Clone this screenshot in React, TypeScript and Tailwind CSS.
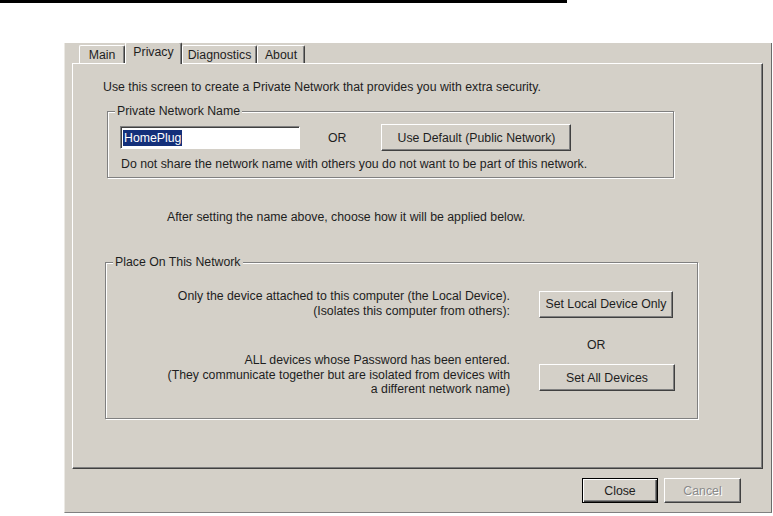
import React from 'react';

const raised =
  'border border-t-white border-l-white border-r-[#404040] border-b-[#404040] shadow-[inset_-1px_-1px_0_#808080]';

const Button: React.FC<{ label: string; className?: string }> = ({ label, className }) => (
  <div className={`flex items-center justify-center bg-[#d4d0c8] ${raised} ${className ?? ''}`}>{label}</div>
);

const Tab: React.FC<{ label: string; width: string; active?: boolean }> = ({ label, width, active }) => (
  <div
    className={`${width} flex items-center justify-center border-t border-l border-r border-t-white border-l-white border-r-[#404040] rounded-t-[2px] shadow-[inset_-1px_0_0_#808080] ${
      active ? 'relative z-10 h-[22px] -mb-px bg-[#d4d0c8]' : 'h-[18px]'
    }`}
  >
    <span className={active ? '-mt-[3px]' : ''}>{label}</span>
  </div>
);

const GroupLabel: React.FC<{ label: string; ml: string }> = ({ label, ml }) => (
  <div className={`-mt-[8px] ${ml} w-fit px-[2px] bg-[#d4d0c8] leading-[14px]`}>{label}</div>
);

export default function App() {
  return (
    <div className="w-[773px] h-[516px] bg-white overflow-hidden font-['Liberation_Sans',Arial,sans-serif] text-[12.3px] leading-[14px] text-[#1e1e1e]">
      <div className="h-[3px] w-[567px] bg-black" />

      {/* dialog */}
      <div className="ml-[64px] mt-[40px] w-[708px] h-[470px] bg-[#d4d0c8] border-l border-l-[#ebe9e4] border-r border-r-[#6a6a6a] border-b border-b-[#808080] flex flex-col">
        {/* tab strip */}
        <div className="ml-[14px] h-[20px] flex items-end">
          <Tab label="Main" width="w-[46px]" />
          <Tab label="Privacy" width="w-[57px]" active />
          <Tab label="Diagnostics" width="w-[75px]" />
          <Tab label="About" width="w-[48px]" />
        </div>

        {/* tab page */}
        <div className="ml-[7px] w-[691px] h-[406px] border border-t-white border-l-white border-r-[#404040] border-b-[#404040] shadow-[inset_-1px_-1px_0_#808080] flex flex-col">
          <div className="mt-[16px] ml-[30px]">
            Use this screen to create a Private Network that provides you with extra security.
          </div>

          {/* private network name */}
          <div className="mt-[17px] ml-[34px] w-[567px] h-[67px] border border-[#808080] shadow-[inset_1px_1px_0_#fff,1px_1px_0_#fff] flex flex-col">
            <GroupLabel label="Private Network Name" ml="ml-[7px]" />
            <div className="mt-[6px] ml-[12px] h-[27px] flex items-center">
              <div className="w-[180px] h-[23px] bg-white border border-t-[#808080] border-l-[#808080] border-b-white border-r-white shadow-[inset_1px_1px_0_#404040] flex items-center pl-[2px]">
                <span className="bg-[#14307a] text-white px-[1px] leading-[16px]">HomePlug</span>
              </div>
              <div className="ml-[28px]">OR</div>
              <Button label="Use Default (Public Network)" className="ml-[35px] w-[190px] h-[27px]" />
            </div>
            <div className="mt-[6px] ml-[13px]">
              Do not share the network name with others you do not want to be part of this network.
            </div>
          </div>

          <div className="mt-[32px] ml-[94px]">
            After setting the name above, choose how it will be applied below.
          </div>

          {/* place on this network */}
          <div className="mt-[38px] ml-[32px] w-[593px] h-[157px] border border-[#808080] shadow-[inset_1px_1px_0_#fff,1px_1px_0_#fff] flex flex-col">
            <GroupLabel label="Place On This Network" ml="ml-[7px]" />
            <div className="mt-[20px] flex items-center">
              <div className="w-[404px] text-right leading-[15px]">
                <div>Only the device attached to this computer (the Local Device).</div>
                <div>(Isolates this computer from others):</div>
              </div>
              <Button label="Set Local Device Only" className="ml-[29px] w-[134px] h-[27px]" />
            </div>
            <div className="mt-[19px] ml-[481px]">OR</div>
            <div className="mt-px flex items-start">
              <div className="w-[404px] text-right leading-[14.5px]">
                <div>ALL devices whose Password has been entered.</div>
                <div>(They communicate together but are isolated from devices with</div>
                <div>a different network name)</div>
              </div>
              <Button label="Set All Devices" className="mt-[11px] ml-[29px] w-[136px] h-[27px]" />
            </div>
          </div>
        </div>

        {/* footer */}
        <div className="mt-[9px] mr-[30px] flex justify-end gap-[6px]">
          <div className="w-[76px] h-[25px] border border-black bg-[#d4d0c8] shadow-[inset_1px_1px_0_#fff,inset_-1px_-1px_0_#404040,inset_-2px_-2px_0_#808080] flex items-center justify-center">
            Close
          </div>
          <div className={`w-[77px] h-[25px] bg-[#d4d0c8] ${raised} flex items-center justify-center text-[#8a8a8a] [text-shadow:1px_1px_0_#fff]`}>
            Cancel
          </div>
        </div>
      </div>
    </div>
  );
}
